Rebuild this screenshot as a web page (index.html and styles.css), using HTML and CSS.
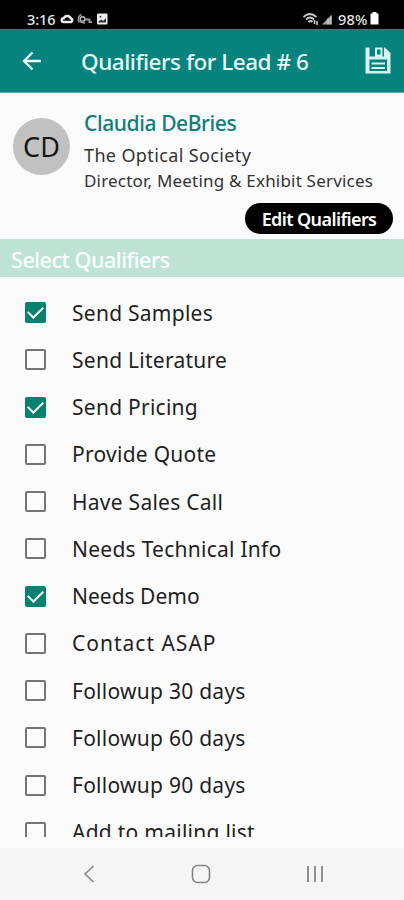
FILE: index.html
```html
<!DOCTYPE html>
<html lang="en">
<head>
<meta charset="utf-8">
<title>Qualifiers for Lead # 6</title>
<link rel="stylesheet" href="styles.css">
</head>
<body>
<div class="phone">
  <div class="status">
    <span class="time">3:16</span>
    <svg class="st-left" width="50" height="14" viewBox="0 0 50 14">
      <path d="M3.500 10a1.900 1.900 0 0 1 .2-3.800 4 4 0 0 1 7.300.300 1.900 1.900 0 0 1 .3 3.500z" fill="none" stroke="#ececec" stroke-width="2.400"/>
      <path d="M21.500 2.500a5 5 0 0 0-2 8" fill="none" stroke="#999" stroke-width="1.500"/>
      <circle cx="22.500" cy="7" r="2.300" fill="none" stroke="#bbb" stroke-width="1.500"/>
      <path d="M24.500 7.500h5v2.500h2.500M20 9.500l5 1.500" fill="none" stroke="#999" stroke-width="1.900"/>
      <rect x="37" y="1.500" width="10.500" height="11" rx="1" fill="#eee"/>
      <path d="M38.500 9.500l2.500-2 2 1.500 3-3v4.500h-7.500z" fill="#333"/>
      <circle cx="40.500" cy="4.800" r="1" fill="#444"/>
    </svg>
    <svg class="st-right" width="32" height="14" viewBox="0 0 32 14">
      <path d="M.500 5q6-6 13 0M3 7.500q4-4 8 0M5.500 10q2-2 4 0" fill="none" stroke="#c8c8c8" stroke-width="1.800"/>
      <path d="M11.500 8v4M14 9v4" stroke="#ccc" stroke-width="1.600"/>
      <path d="M19 12.500L28.500 3v9.500z" fill="#a5a5a5"/>
      <path d="M25 6v6.500M28 3.500v9" stroke="#ddd" stroke-width="1"/>
    </svg>
    <span class="pct">98%</span>
    <svg width="9" height="13" viewBox="0 0 9 13"><path d="M2.500 0h4v1.500H8.500V12.500H.5V1.500h2z" fill="#fff"/></svg>
  </div>

  <header class="bar">
    <svg class="back" width="20" height="20" viewBox="0 0 20 20"><path d="M19 10H2.500M10.500 1.500L2 10l8.500 8.500" fill="none" stroke="#e9fbf9" stroke-width="2.300"/></svg>
    <h1 class="title">Qualifiers for Lead # 6</h1>
    <svg class="save" width="26" height="27" viewBox="0 0 26 27">
      <path fill="#d4f3f1" fill-rule="evenodd" d="M.500.500h4v9H10V.500h10l5.500 5.500v20.500H.500zM12 2.500v5h3.500v-5zM17.500.500v9H19V.500zM4.500 12.500v11.500h17.500V12.500z"/>
      <path d="M6.500 16.500h13.500M6.500 21h13.500" stroke="#d4f3f1" stroke-width="2.200"/>
    </svg>
  </header>

  <section class="lead">
    <div class="avatar"><span>CD</span></div>
    <div class="info">
      <div class="name"><span>Claudia DeBries</span></div>
      <div class="org"><span>The Optical Society</span></div>
      <div class="role"><span>Director, Meeting &amp; Exhibit Services</span></div>
    </div>
  </section>
  <div class="actions"><button class="edit" type="button">Edit Qualifiers</button></div>

  <h2 class="section"><span>Select Qualifiers</span></h2>

  <ul class="list">
    <li><i class="box on"></i><span>Send Samples</span></li>
    <li><i class="box"></i><span>Send Literature</span></li>
    <li><i class="box on"></i><span>Send Pricing</span></li>
    <li><i class="box"></i><span>Provide Quote</span></li>
    <li><i class="box"></i><span>Have Sales Call</span></li>
    <li><i class="box"></i><span>Needs Technical Info</span></li>
    <li><i class="box on"></i><span class="snug">Needs Demo</span></li>
    <li><i class="box"></i><span class="wide">Contact ASAP</span></li>
    <li><i class="box"></i><span>Followup 30 days</span></li>
    <li><i class="box"></i><span>Followup 60 days</span></li>
    <li><i class="box"></i><span>Followup 90 days</span></li>
    <li><i class="box"></i><span>Add to mailing list</span></li>
  </ul>

  <nav class="nav">
    <svg width="12" height="18" viewBox="0 0 12 18"><path d="M10.500 1L2 9l8.500 8" fill="none" stroke="#858585" stroke-width="1.600"/></svg>
    <svg width="20" height="20" viewBox="0 0 20 20"><rect x="1.500" y="1.500" width="17" height="17" rx="5" fill="none" stroke="#858585" stroke-width="1.600"/></svg>
    <svg width="18" height="18" viewBox="0 0 18 18"><path d="M2 1v16M9 1v16M16 1v16" stroke="#8c8c8c" stroke-width="1.900"/></svg>
  </nav>
</div>
</body>
</html>
```
FILE: styles.css
```css
* { box-sizing: border-box; }
body { margin: 0; font-family: "Noto Sans", "Open Sans", sans-serif; }
.phone { width: 404px; height: 900px; background: #fbfbfb; display: flex; flex-direction: column; overflow: hidden; }
.phone > * { flex: none; }

.status { height: 29px; background: #000; color: #e6e6e6; display: flex; align-items: center; padding: 8px 25px 0 27px; font-size: 14.5px; font-weight: 500; line-height: 20px; white-space: nowrap; }
.time { width: 33px; letter-spacing: -.1px; }
.st-left { margin-right: auto; }
.st-right { margin-right: 3px; }
.pct { width: 32px; letter-spacing: .2px; }

.bar { height: 64px; background: #05837c; border-bottom: 1px solid #5fa9a4; display: flex; align-items: center; padding: 0 13px 0 22px; color: #e9fbf9; }
.title { margin: 2px auto 0 39px; font-size: 22.5px; font-weight: 500; line-height: 30px; white-space: nowrap; letter-spacing: -.47px; }

.lead { height: 108px; display: flex; padding: 25px 0 0 13px; white-space: nowrap; }
.avatar { width: 57px; height: 57px; border-radius: 50%; background: #c1c1c1; color: #151515; display: flex; align-items: center; justify-content: center; font-size: 27px; line-height: 30px; }
.info { margin: -10px 0 0 14px; }
.name { font-size: 21px; line-height: 30px; font-weight: 500; color: #0d8078; letter-spacing: -.4px; }
.org { font-size: 18px; line-height: 25px; margin-top: 5px; color: #333; letter-spacing: .37px; }
.role { font-size: 17px; line-height: 25px; color: #333; letter-spacing: .2px; }

.actions { height: 38px; display: flex; justify-content: flex-end; align-items: flex-start; padding: 2px 11px 0 0; }
.edit { width: 148px; height: 31px; border: 0; border-radius: 16px; padding: 1px 0 0; background: #000; color: #fff; font: 600 18px/30px "Noto Sans", sans-serif; letter-spacing: -.6px; white-space: nowrap; }

.section { margin: 0; height: 38px; padding-left: 11px; background: #bee3d5; color: #fafffd; font-size: 21.5px; line-height: 41px; font-weight: 500; letter-spacing: -.45px; }

.list { list-style: none; margin: 0; padding: 12px 0 0; height: 560px; overflow: hidden; color: #1f1f1f; font-size: 21px; letter-spacing: .26px; }
.list li { height: 47.25px; display: flex; align-items: center; padding-left: 25px; line-height: 30px; white-space: nowrap; }
.list .snug { letter-spacing: 0; }
.list .wide { letter-spacing: 1px; }
.box { width: 21px; height: 21px; border: 2px solid #757575; border-radius: 2px; margin-right: 26px; display: flex; align-items: center; justify-content: center; }
.box.on { background: #06806f; border-color: #06806f; }
.box.on::after { content: ""; width: 13px; height: 7px; border: solid #fff; border-width: 0 0 2.5px 2.5px; transform: translateY(-2px) rotate(-45deg); flex: none; }

.nav { margin-top: 11px; height: 52px; background: #f5f5f5; display: flex; align-items: center; justify-content: space-between; padding: 0 80px 0 83px; }
```
